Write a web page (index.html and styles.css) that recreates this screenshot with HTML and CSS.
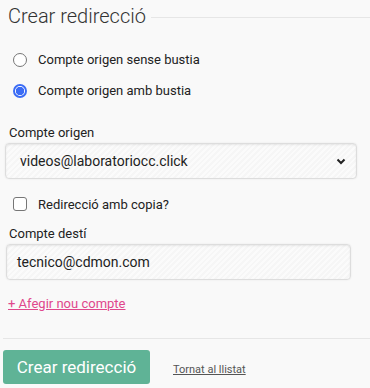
FILE: index.html
```html
<!DOCTYPE html>
<html lang="ca">
<head>
    <meta charset="UTF-8">
    <meta name="viewport" content="width=device-width, initial-scale=1.0">
    <title>Crear redirecció</title>
    <link rel="stylesheet" href="styles.css">
</head>
<body>

    <div class="redirect-container">
        <div class="title-row">
            <h2>Crear redirecció</h2>
            <span class="title-line"></span>
        </div>

        <form id="redirectForm">
            <!-- Tipus de compte -->
            <div class="radio-group">
                <label class="option">
                    <span class="radio"></span>
                    Compte origen sense bustia
                </label>
                <label class="option">
                    <span class="radio checked"></span>
                    Compte origen amb bustia
                </label>
            </div>

            <!-- Compte origen -->
            <div class="form-group">
                <label class="field-label">Compte origen</label>
                <div class="select-box">
                    <span>videos@laboratoriocc.click</span>
                    <svg class="chevron" width="10" height="7" viewBox="0 0 10 7">
                        <path d="M1.5 1.5 L5 5 L8.5 1.5" fill="none" stroke="#222" stroke-width="2"/>
                    </svg>
                </div>
            </div>

            <!-- Copia -->
            <label class="option check-option">
                <span class="checkbox"></span>
                Redirecció amb copia?
            </label>

            <!-- Compte desti -->
            <div class="form-group">
                <label class="field-label dest-label">Compte destí</label>
                <div class="text-box">tecnico@cdmon.com</div>
            </div>

            <a href="#" class="add-link">+ Afegir nou compte</a>

            <div class="actions">
                <button type="submit" class="btn-submit">Crear redirecció</button>
                <a href="#" class="back-link">Tornat al llistat</a>
            </div>
        </form>
    </div>

</body>
</html>
```

FILE: styles.css
```css
* {
    box-sizing: border-box;
    margin: 0;
    padding: 0;
}

body {
    font-family: Roboto, "Liberation Sans", Arial, sans-serif;
    background-color: #f9f9f9;
    color: #222;
}

.redirect-container {
    width: 370px;
}

.title-row {
    display: flex;
    align-items: center;
    padding: 3px 0 0 8px;
}

h2 {
    font-size: 20px;
    font-weight: 300;
    color: #333;
    line-height: 26px;
}

.title-line {
    flex: 1;
    height: 1px;
    margin-left: 5px;
    margin-top: 3px;
    background-color: #e6e6e6;
}

.radio-group {
    padding: 15px 0 0 13px;
}

.option {
    display: flex;
    align-items: center;
    font-size: 13px;
    color: #222;
    height: 31px;
}

.radio {
    width: 14px;
    height: 14px;
    border: 1px solid #767676;
    border-radius: 50%;
    background-color: #fff;
    margin-right: 11px;
}

.radio.checked {
    border: 2px solid #3b6cf5;
    background: radial-gradient(circle, #3b6cf5 0 4px, #fff 4.5px);
}

.form-group {
    padding: 0 0 0 5px;
}

.field-label {
    display: block;
    font-size: 13px;
    color: #222;
    padding-left: 4px;
    margin: 19px 0 3px;
}

.dest-label {
    margin-top: 10px;
}

.select-box,
.text-box {
    display: flex;
    align-items: center;
    height: 36px;
    border: 1px solid #ddd;
    border-radius: 4px;
    box-shadow: inset 0 1px 2px rgba(0, 0, 0, 0.08), 0 0 2px rgba(0, 0, 0, 0.08);
    background: repeating-linear-gradient(135deg, #fbfbfb 0 2px, #f6f6f6 2px 4px);
    font-size: 14px;
    color: #222;
}

.select-box {
    width: 352px;
    justify-content: space-between;
    padding: 0 10px 0 14px;
}

.text-box {
    width: 345px;
    margin-left: 1px;
    padding-left: 10px;
}

.check-option {
    padding-left: 13px;
    margin-top: 13px;
    height: 24px;
}

.checkbox {
    width: 14px;
    height: 14px;
    border: 1px solid #767676;
    border-radius: 3px;
    background-color: #fff;
    margin-right: 11px;
}

.add-link {
    display: inline-block;
    font-size: 13px;
    color: #e0478c;
    margin: 16px 0 0 8px;
}

.actions {
    display: flex;
    align-items: center;
    margin-top: 26px;
    padding: 11px 0 0 3px;
    border-top: 1px solid #e6e6e6;
    margin-left: 3px;
}

.btn-submit {
    width: 147px;
    height: 34px;
    background-color: #5fb396;
    border: none;
    border-radius: 3px;
    color: #fff;
    font-family: inherit;
    font-size: 17px;
    cursor: pointer;
    margin-left: -3px;
}

.back-link {
    font-size: 11px;
    color: #555;
    margin-left: 23px;
    margin-top: 5px;
}
```
